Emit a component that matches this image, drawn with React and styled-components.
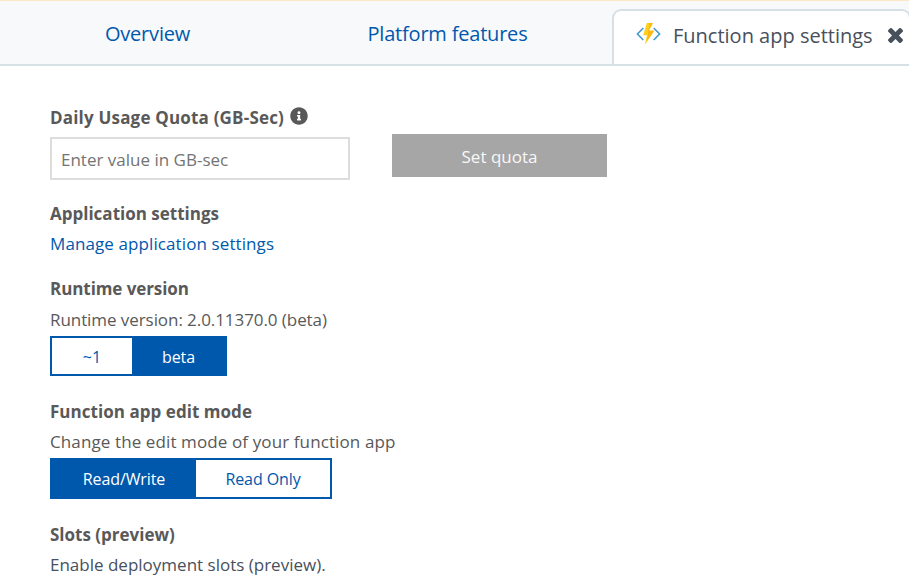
import React, { useState } from "react";
import styled, { createGlobalStyle } from "styled-components";
import { FaInfoCircle } from "react-icons/fa";

const blue = "#0058ad";

const GlobalStyle = createGlobalStyle`
  *, *::before, *::after { box-sizing: border-box; }
  body {
    margin: 0;
    background: #fff;
    color: #595959;
    font-family: "Open Sans", "Noto Sans", sans-serif;
    font-size: 17px;
    overflow: hidden;
  }
`;

const Page = styled.div`
  height: 577px;
  overflow: hidden;
`;

const TabBar = styled.nav`
  display: flex;
  align-items: flex-end;
  height: 66px;
  background: #f8f9fb;
  border-top: 1px solid #fde7c6;
  border-bottom: 2px solid #d6e1e5;
  overflow: hidden;
`;

const Tab = styled.a`
  flex: none;
  width: ${(p) => p.$width}px;
  height: 63px;
  padding-top: 19px;
  text-align: center;
  font-size: 20px;
  line-height: 28px;
  letter-spacing: -0.2px;
  color: ${blue};
  cursor: pointer;
`;

const ActiveTab = styled.div`
  flex: none;
  display: flex;
  align-items: flex-start;
  width: 299px;
  height: 55px;
  margin-left: 12px;
  padding: 11px 0 0 22px;
  background: #fff;
  border: 2px solid #d6e1e5;
  border-bottom: 0;
  border-radius: 9px 9px 0 0;
  font-size: 20px;
  line-height: 28px;
  color: #48505c;
`;

const TabTitle = styled.span`
  flex: none;
  width: 226px;
  padding-left: 12px;
  white-space: nowrap;
`;

const BoltSvg = styled.svg`
  flex: none;
  width: 25px;
  height: 23px;
  margin-top: 1px;
`;

const CloseButton = styled.button`
  flex: none;
  display: flex;
  margin: 6px 0 0 1px;
  padding: 0;
  border: 0;
  background: none;
  color: #48505c;

  svg { width: 15px; height: 15px; }
`;

const Content = styled.main`
  padding: 37px 50px 0;
`;

const Section = styled.section`
  margin-bottom: ${(p) => p.$gap}px;
`;

const Title = styled.h2`
  display: flex;
  margin: 0;
  font-size: 17px;
  font-weight: 700;
  line-height: 30px;
  letter-spacing: ${(p) => p.$tracking || 0}px;

  svg { margin: 4px 0 0 6px; width: 18px; height: 18px; }
`;

const Text = styled.p`
  margin: ${(p) => p.$top || 0}px 0 0;
  line-height: 30px;
  letter-spacing: ${(p) => p.$tracking || 0}px;
  color: ${(p) => (p.$dark ? "#48505c" : "inherit")};
`;

const Link = styled.a`
  display: block;
  line-height: 30px;
  letter-spacing: 0.1px;
  color: ${blue};
  cursor: pointer;
`;

const QuotaRow = styled.div`
  display: flex;
  gap: 42px;
  align-items: flex-start;
  height: 46px;
  margin-top: 1px;
`;

const QuotaInput = styled.input`
  width: 300px;
  height: 43px;
  margin-top: 3px;
  padding: 2px 8px 0 9px;
  border: 2px solid #ddd;
  outline: 0;
  font: inherit;
  color: #595959;

  &::placeholder { color: #737373; opacity: 1; }
`;

const QuotaButton = styled.button`
  width: 215px;
  height: 43px;
  padding: 2px 0 0;
  border: 0;
  background: #a6a6a6;
  color: #f8f8f8;
  font: inherit;
`;

const Toggle = styled.div`
  display: flex;
  width: ${(p) => p.$width}px;
  height: ${(p) => p.$height}px;
  margin-top: ${(p) => p.$top}px;
  border: 2px solid ${blue};
`;

const Option = styled.button`
  width: ${(p) => p.$width}px;
  padding: 1px 0 0;
  border: 0;
  background: ${(p) => (p.$active ? blue : "#fff")};
  color: ${(p) => (p.$active ? "#fff" : blue)};
  font: inherit;
  font-size: 16px;
  letter-spacing: ${(p) => p.$tracking || 0}px;
`;

function FunctionIcon() {
  return (
    <BoltSvg viewBox="0 0 25 23">
      <defs>
        <linearGradient id="bolt" x1="0" y1="0" x2="1" y2="0.25">
          <stop offset="0.5" stopColor="#ffcf1c" />
          <stop offset="0.51" stopColor="#fbb911" />
        </linearGradient>
      </defs>
      <path d="M7.3 5 1.4 11l5.9 6M17.7 5l5.9 6-5.9 6" fill="none" stroke="#429bcb" strokeWidth="1.6" />
      <path d="M10.8 0h6.2l-4 7.5h5.5L8.7 22l2.3-9.7H7.2z" fill="url(#bolt)" />
    </BoltSvg>
  );
}

function CloseIcon() {
  return (
    <svg viewBox="302 366 1188 1188" fill="currentColor">
      <path d="M1490 1322q0 40-28 68l-136 136q-28 28-68 28t-68-28l-294-294-294 294q-28 28-68 28t-68-28l-136-136q-28-28-28-68t28-68l294-294-294-294q-28-28-28-68t28-68l136-136q28-28 68-28t68 28l294 294 294-294q28-28 68-28t68 28l136 136q28 28 28 68t-28 68l-294 294 294 294q28 28 28 68z" />
    </svg>
  );
}

export default function App() {
  const [runtime, setRuntime] = useState("beta");
  const [mode, setMode] = useState("rw");

  return (
    <Page>
      <GlobalStyle />
      <TabBar>
        <Tab $width={295}>Overview</Tab>
        <Tab $width={305}>Platform features</Tab>
        <ActiveTab>
          <FunctionIcon />
          <TabTitle>Function app settings</TabTitle>
          <CloseButton aria-label="Close"><CloseIcon /></CloseButton>
        </ActiveTab>
      </TabBar>
      <Content>
        <Section $gap={19}>
          <Title $tracking={0.19}>Daily Usage Quota (GB-Sec)<FaInfoCircle /></Title>
          <QuotaRow>
            <QuotaInput placeholder="Enter value in GB-sec" />
            <QuotaButton>Set quota</QuotaButton>
          </QuotaRow>
        </Section>
        <Section $gap={15}>
          <Title>Application settings</Title>
          <Link>Manage application settings</Link>
        </Section>
        <Section $gap={21}>
          <Title $tracking={-0.08}>Runtime version</Title>
          <Text $top={1} $tracking={-0.07}>Runtime version: 2.0.11370.0 (beta)</Text>
          <Toggle $width={177} $height={40} $top={1}>
            <Option $width={80} $active={runtime === "1"} onClick={() => setRuntime("1")}>~1</Option>
            <Option $width={93} $tracking={-0.1} $active={runtime === "beta"} onClick={() => setRuntime("beta")}>beta</Option>
          </Toggle>
        </Section>
        <Section $gap={21}>
          <Title $tracking={0.04}>Function app edit mode</Title>
          <Text $tracking={0.11}>Change the edit mode of your function app</Text>
          <Toggle $width={282} $height={41} $top={1}>
            <Option $width={144} $tracking={-0.1} $active={mode === "rw"} onClick={() => setMode("rw")}>Read/Write</Option>
            <Option $width={134} $tracking={-0.1} $active={mode === "ro"} onClick={() => setMode("ro")}>Read Only</Option>
          </Toggle>
        </Section>
        <Section $gap={0}>
          <Title>Slots (preview)</Title>
          <Text $dark>Enable deployment slots (preview).</Text>
        </Section>
      </Content>
    </Page>
  );
}
